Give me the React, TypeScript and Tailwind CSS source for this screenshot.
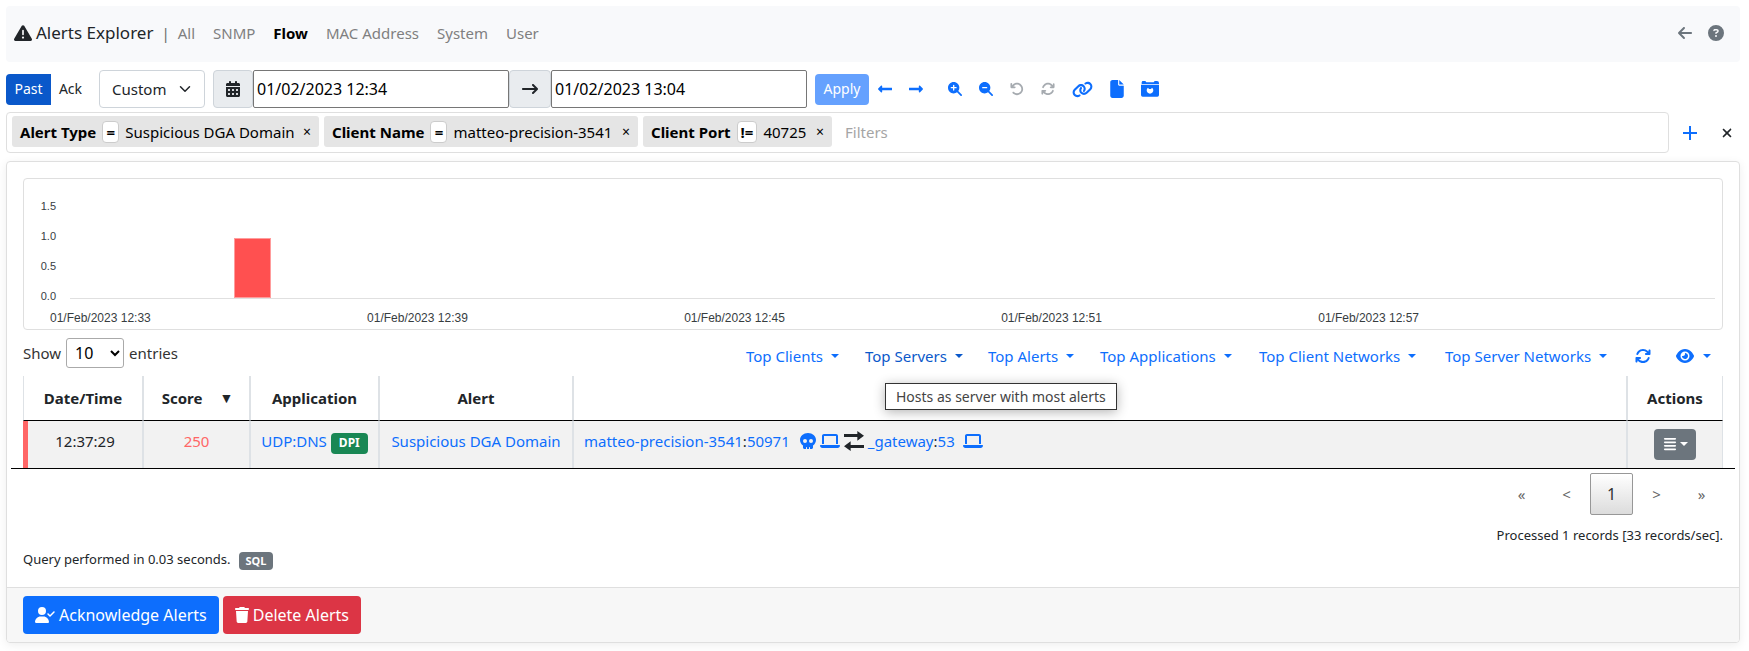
import React from 'react';
import {
  FaAlignJustify, FaArrowLeft, FaArrowRightLong, FaArrowRotateLeft, FaArrowsRotate, FaCalendarDays, FaCircleQuestion,
  FaEye, FaFile, FaLaptop, FaLink, FaMagnifyingGlassMinus, FaMagnifyingGlassPlus, FaSkull, FaTrash,
  FaTriangleExclamation, FaUserCheck, FaXmark,
} from 'react-icons/fa6';
import { FaLongArrowAltLeft, FaLongArrowAltRight } from 'react-icons/fa';

const tabs = ['All', 'SNMP', 'Flow', 'MAC Address', 'System', 'User'];

const filters = [
  { field: 'Alert Type', op: '=', value: 'Suspicious DGA Domain', width: 'w-[307px]' },
  { field: 'Client Name', op: '=', value: 'matteo-precision-3541', width: 'w-[314px]' },
  { field: 'Client Port', op: '!=', value: '40725', width: 'w-[189px]' },
];

const menus = [
  { label: 'Top Clients', width: 'w-[119px]' },
  { label: 'Top Servers', width: 'w-[123px]', tip: 'Hosts as server with most alerts' },
  { label: 'Top Alerts', width: 'w-[112px]' },
  { label: 'Top Applications', width: 'w-[159px]' },
  { label: 'Top Client Networks', width: 'w-[186px]' },
  { label: 'Top Server Networks', width: 'w-[190px]' },
];

function Caret() {
  return <span className="inline-block size-0 border-x-4 border-t-4 border-x-transparent border-t-current" />;
}

function CameraIcon() {
  return (
    <svg viewBox="0 0 54 48" className="h-4 w-[18px]" fill="currentColor" aria-hidden="true">
      <path d="M4 0h9l3 4h22l3-4h7a6 6 0 0 1 6 6v3H2V4Z" />
      <path fillRule="evenodd" d="M0 11h54v31a5 5 0 0 1-5 5H5a5 5 0 0 1-5-5ZM21 20a10 10 0 1 0 12 0l-3 4h-6Z" />
    </svg>
  );
}

function ExchangeIcon() {
  return (
    <svg viewBox="0 0 60 60" className="size-5 text-[#212529]" fill="currentColor" aria-hidden="true">
      <path d="M0 9h40V0l20 14-20 15V18H0ZM60 42H20V31L0 46l20 14V51h40Z" />
    </svg>
  );
}

function Chart() {
  return (
    <div className="flex h-[152px] flex-col rounded border border-[#dfdfdf] pr-[7px] font-[Liberation_Sans,sans-serif] text-[#373d3f]">
      <div className="mt-5 flex h-[100px]">
        <div className="-mb-1 flex w-[46px] flex-col justify-between pr-3.5 text-right text-[11px] leading-[14px]">
          <span>1.5</span>
          <span>1.0</span>
          <span>0.5</span>
          <span>0.0</span>
        </div>
        <div className="flex flex-1 items-end border-b border-[#e0e0e0] pl-[9.7%]">
          <div className="h-[60px] w-[2.5%] border border-[#ff9c9c] bg-[#ff5050]" />
        </div>
      </div>
      <div className="flex pt-[11px] text-[12px] leading-[16px]">
        {['12:33', '12:39', '12:45', '12:51', '12:57'].map((t) => (
          <span key={t} className="w-[18.75%] pl-[26px]">01/Feb/2023 {t}</span>
        ))}
      </div>
    </div>
  );
}

const th = 'border-x border-b border-x-[#dee2e6] border-b-black h-[45px] text-center font-bold';
const td = 'border-x border-x-[#dee2e6] bg-[#f2f2f2] h-[47px] align-top pt-2';
const page = 'h-[42px] w-[43px] rounded-xs text-center text-[#666]';
const iconBtn = 'flex w-[18px] items-center justify-center text-[#0d6efd]';
const mutedBtn = 'flex w-[18px] items-center justify-center text-[#a6abb0]';

export default function App() {
  return (
    <div className="bg-white pt-1.5 pr-[9px] pb-2 pl-1.5 font-['Noto_Sans',sans-serif] text-[15px] leading-6 text-[#212529]">
      <nav className="flex h-14 items-center rounded bg-[#f8f9fb] pr-4 pb-0.5 pl-2">
        <FaTriangleExclamation className="size-[18px]" />
        <h1 className="pl-1 text-[17px]">Alerts Explorer</h1>
        <span className="px-2 text-[#6c6c6c]">|</span>
        <div className="flex gap-[18px]">
          {tabs.map((t) => (
            <a key={t} href="#" className={t === 'Flow' ? 'font-bold text-black' : 'text-[#7f7f80]'}>{t}</a>
          ))}
        </div>
        <div className="ml-auto flex items-center gap-[15px] text-[#6c757d]">
          <a href="#" aria-label="Back"><FaArrowLeft className="size-4" /></a>
          <a href="#" aria-label="Help"><FaCircleQuestion className="size-4" /></a>
        </div>
      </nav>

      <div className="mt-2 flex h-[38px] items-center">
        <button className="h-[31px] w-[45px] rounded-l bg-[#0a58ca] text-[14px] text-white">Past</button>
        <button className="h-[31px] w-[39px] text-[14px]">Ack</button>
        <div className="relative ml-[9px] h-[38px] w-[106px]">
          <select aria-label="Period" className="size-full appearance-none rounded border border-[#ced4da] bg-white pl-3 text-[15px]">
            <option>Custom</option>
          </select>
          <svg viewBox="0 0 16 16" className="pointer-events-none absolute top-[13px] right-3.5 size-3" fill="none" stroke="currentColor" strokeWidth="2" strokeLinecap="round" strokeLinejoin="round">
            <path d="m2 5 6 6 6-6" />
          </svg>
        </div>
        <div className="ml-2 flex h-[38px] items-stretch">
          <span className="flex w-10 items-center justify-center rounded border border-[#ced4da] bg-[#e9ecef]">
            <FaCalendarDays className="size-4" />
          </span>
          <input aria-label="From" defaultValue="01/02/2023 12:34" className="w-64 rounded-xs border border-[#767676] px-[3px] text-[16px] text-black" />
          <span className="flex w-[42px] items-center justify-center rounded border border-[#ced4da] bg-[#e9ecef]">
            <FaArrowRightLong className="size-4" />
          </span>
          <input aria-label="To" defaultValue="01/02/2023 13:04" className="w-64 rounded-xs border border-[#767676] px-[3px] text-[16px] text-black" />
        </div>
        <button className="ml-2 h-[31px] w-[54px] rounded bg-[#65a1fe] text-[14px] text-white">Apply</button>
        <div className="flex items-center gap-[13px] pl-[7px]">
          <button aria-label="Earlier" className={iconBtn}><FaLongArrowAltLeft className="size-4" /></button>
          <button aria-label="Later" className={iconBtn}><FaLongArrowAltRight className="size-4" /></button>
        </div>
        <div className="flex items-center gap-[13px] pl-[21px]">
          <button aria-label="Zoom in" className={iconBtn}><FaMagnifyingGlassPlus className="size-3.5" /></button>
          <button aria-label="Zoom out" className={iconBtn}><FaMagnifyingGlassMinus className="size-3.5" /></button>
          <button aria-label="Undo" className={mutedBtn}><FaArrowRotateLeft className="size-3.5" /></button>
          <button aria-label="Reload" className={mutedBtn}><FaArrowsRotate className="size-3.5" /></button>
        </div>
        <div className="flex items-center gap-[15px] pl-[15px]">
          <button aria-label="Copy link" className="text-[#0d6efd]"><FaLink className="h-[17px] w-[21px]" /></button>
          <button aria-label="Export" className={iconBtn}><FaFile className="h-[18px] w-3.5" /></button>
          <button aria-label="Snapshot" className={iconBtn}><CameraIcon /></button>
        </div>
      </div>

      <div className="mt-1 flex h-[41px] items-center">
        <div className="flex h-full flex-1 items-center gap-[5px] rounded border border-[#dfdfdf] px-[5px] pb-[2px]">
          {filters.map((f) => (
            <div key={f.field} className={`flex h-[31px] items-center rounded-[3px] bg-[#e5e5e5] px-2 text-black ${f.width}`}>
              <b>{f.field}</b>
              <span className="mx-1.5 flex h-[22px] min-w-[17px] items-center justify-center rounded border border-[#ccc] bg-white px-[3px] font-bold">{f.op}</span>
              <span>{f.value}</span>
              <button aria-label={`Remove ${f.field}`} className="ml-auto text-[14px]">×</button>
            </div>
          ))}
          <input aria-label="Filters" placeholder="Filters" className="ml-2 w-40 outline-none placeholder:text-[#a5a5a5]" />
        </div>
        <button aria-label="Add filter" className="ml-3.5 text-[#0d6efd]">
          <svg viewBox="0 0 14 14" className="size-3.5" stroke="currentColor" strokeWidth="2"><path d="M7 0v14M0 7h14" /></svg>
        </button>
        <button aria-label="Clear filters" className="mr-1.5 ml-[23px]"><FaXmark className="size-3.5" /></button>
      </div>

      <main className="mt-2 rounded border border-[#dfdfdf] shadow-[0_2px_10px_rgba(0,0,0,0.07)]">
        <div className="px-4 pt-4">
          <Chart />
          <div className="flex h-[46px] items-start justify-between pt-2">
            <label className="flex items-center gap-[5px] text-[#333]">
              Show
              <select className="h-[30px] w-[58px] rounded-[3px] border border-[#aaa] bg-white px-1 text-[16px] text-black">
                <option>10</option>
              </select>
              entries
            </label>
            <div className="flex items-center pt-1.5 pr-[3px] text-[#0d6efd]">
              {menus.map((m) => (
                <div key={m.label} className={`relative ${m.width}`}>
                  <button className={`flex items-center gap-2 ${m.tip ? 'text-[#0a58ca]' : ''}`}>
                    {m.label}
                    <Caret />
                  </button>
                  {m.tip && (
                    <div role="tooltip" className="absolute top-[39px] left-5 z-10 flex h-[27px] items-center border border-[#333] bg-white px-2.5 text-[14px] whitespace-nowrap text-[#444] shadow-[0_2px_12px_rgba(0,0,0,0.3)]">
                      {m.tip}
                    </div>
                  )}
                </div>
              ))}
              <button aria-label="Refresh" className="mr-[25px]"><FaArrowsRotate className="size-4" /></button>
              <button aria-label="Columns" className="mr-[9px] flex items-center gap-[9px]">
                <FaEye className="h-4 w-[18px]" />
                <Caret />
              </button>
            </div>
          </div>

          <div className="-mx-3 border-b border-black px-3">
            <table className="w-full table-fixed border-separate border-spacing-0">
              <thead>
                <tr>
                  <th className={`w-[120px] ${th}`}>Date/Time</th>
                  <th className={`w-[107px] ${th}`}>
                    <span className="flex items-center justify-center gap-[17px] pl-0.5">Score <span className="text-[14px]">▼</span></span>
                  </th>
                  <th className={`w-[129px] ${th}`}>Application</th>
                  <th className={`w-[194px] ${th}`}>Alert</th>
                  <th className={th} aria-label="Flow" />
                  <th className={`w-24 ${th}`}>Actions</th>
                </tr>
              </thead>
              <tbody>
                <tr>
                  <td className="h-[47px] border-r border-l-[5px] border-r-[#dee2e6] border-l-[#ff6666] bg-[#f2f2f2] pt-2 text-center align-top">12:37:29</td>
                  <td className={`text-center text-[#ff6666] ${td}`}>250</td>
                  <td className={td}>
                    <div className="flex h-6 items-center justify-center gap-1">
                      <a href="#" className="text-[#0d6efd]">UDP:DNS</a>
                      <span className="mt-1 flex h-[21px] items-center rounded bg-[#198754] px-2 text-[12px] font-bold text-white">DPI</span>
                    </div>
                  </td>
                  <td className={`text-center ${td}`}><a href="#" className="text-[#0d6efd]">Suspicious DGA Domain</a></td>
                  <td className={`pl-2.5 ${td}`}>
                    <div className="flex items-center gap-1 text-[#0d6efd]">
                      <span className="pr-1.5">
                        <a href="#">matteo-precision-3541</a><span className="text-[#212529]">:</span><a href="#">50971</a>
                      </span>
                      <FaSkull className="size-4" />
                      <FaLaptop className="h-4 w-5" />
                      <ExchangeIcon />
                      <span className="pr-1">
                        <a href="#">_gateway</a><span className="text-[#212529]">:</span><a href="#">53</a>
                      </span>
                      <FaLaptop className="h-4 w-5" />
                    </div>
                  </td>
                  <td className={td}>
                    <button aria-label="Actions" className="mx-auto flex h-[31px] w-[42px] items-center justify-center gap-[3px] rounded bg-[#6c757d] pb-0.5 text-white">
                      <FaAlignJustify className="size-3.5" />
                      <Caret />
                    </button>
                  </td>
                </tr>
              </tbody>
            </table>
          </div>

          <div className="flex justify-end gap-0.5 pt-1">
            <button className={page}>«</button>
            <button className={page}>&lt;</button>
            <button className="h-[42px] w-[43px] rounded-xs border border-[#979797] bg-linear-to-b from-white to-[#dcdcdc] text-[16px] text-[#333]">1</button>
            <button className={page}>&gt;</button>
            <button className={page}>»</button>
          </div>
          <p className="mt-2 text-right text-[13px]">Processed 1 records [33 records/sec].</p>
          <p className="flex items-center gap-2 pb-4 text-[13px]">
            Query performed in 0.03 seconds.
            <a href="#" className="mt-1 flex h-[18px] items-center rounded bg-[#6c757d] px-[7px] text-[11px] font-bold text-white">SQL</a>
          </p>
        </div>
        <footer className="flex gap-1 rounded-b border-t border-[#dfdfdf] bg-[#f7f7f7] px-4 py-2">
          <button className="flex h-[38px] items-center gap-1 rounded bg-[#0d6efd] px-3 text-[16px] text-white">
            <FaUserCheck className="h-4 w-5" />
            Acknowledge Alerts
          </button>
          <button className="flex h-[38px] items-center gap-1 rounded bg-[#dc3545] px-3 text-[16px] text-white">
            <FaTrash className="h-4 w-3.5" />
            Delete Alerts
          </button>
        </footer>
      </main>
    </div>
  );
}
